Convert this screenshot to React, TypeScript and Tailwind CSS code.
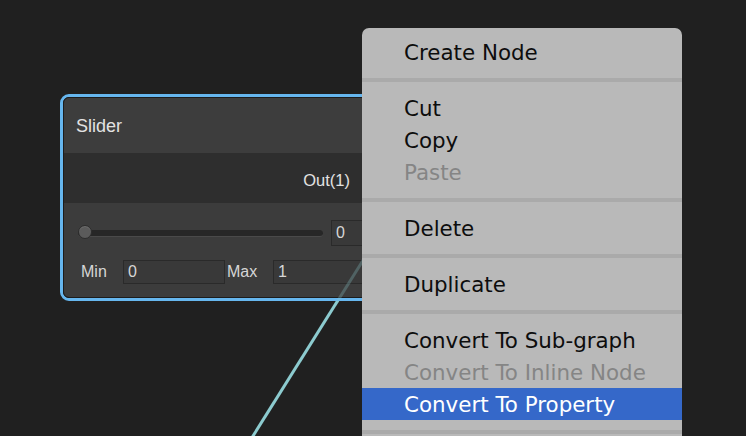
import React from 'react';

type MenuEntry = { label: string; disabled?: boolean; active?: boolean } | 'sep';

const menu: MenuEntry[] = [
  { label: 'Create Node' },
  'sep',
  { label: 'Cut' },
  { label: 'Copy' },
  { label: 'Paste', disabled: true },
  'sep',
  { label: 'Delete' },
  'sep',
  { label: 'Duplicate' },
  'sep',
  { label: 'Convert To Sub-graph' },
  { label: 'Convert To Inline Node', disabled: true },
  { label: 'Convert To Property', active: true },
  'sep',
];

const NodeInput = ({ value, className }: { value: string; className: string }) => (
  <div className={`bg-[#393939] border border-[#2a2a2a] text-[16px] text-[#d6d6d6] pl-[4px] flex items-center ${className}`}>
    {value}
  </div>
);

const SliderNode = () => (
  <div className="absolute left-[60px] top-[94px] w-[340px] rounded-[9px] border-[3px] border-[#66b6ee] font-['Liberation_Sans',sans-serif]">
    <div className="rounded-[6px] border border-[#1c1c1c] overflow-hidden">
      <div className="h-[55px] bg-[#3d3d3d] flex items-center pl-[12px] pt-[1px] text-[18px] text-[#e2e2e2]">Slider</div>
      <div className="h-[50px] bg-[#2e2e2e] flex items-center justify-end pr-[46px] pt-[4px] text-[16.5px] text-[#e2e2e2]">Out(1)</div>
      <div className="h-[94px] bg-[#3c3c3c] pt-[17px] flex flex-col gap-[14px]">
        <div className="flex items-center pl-[14px] h-[26px]">
          <div className="relative w-[245px] h-[7px] rounded-full bg-[#272727] border-b border-[#4a4a4a]">
            <div className="absolute left-0 top-[-5px] w-[14px] h-[14px] rounded-full bg-[#5b5b5b] border border-[#2c2c2c] shadow-[inset_0_1px_0_#6e6e6e]" />
          </div>
          <NodeInput value="0" className="ml-[8px] w-[62px] h-[26px]" />
        </div>
        <div className="flex items-center pl-[17px] h-[24px]">
          <div className="w-[42px] text-[16px] text-[#d6d6d6]">Min</div>
          <NodeInput value="0" className="w-[102px] h-[24px]" />
          <div className="w-[48px] pl-[2px] text-[16px] text-[#d6d6d6]">Max</div>
          <NodeInput value="1" className="w-[110px] h-[24px]" />
        </div>
      </div>
    </div>
  </div>
);

const ContextMenu = () => (
  <div className="absolute left-[362px] top-[28px] w-[320px] h-[440px] rounded-[7px] bg-[#b9b9b9] pt-[8px] font-['DejaVu_Sans',sans-serif] text-[21.4px]">
    {menu.map((m, i) =>
      m === 'sep' ? (
        <div key={i} className="my-[10px] h-[4px] bg-[#aaaaaa]" />
      ) : (
        <div
          key={i}
          className={`h-[32px] flex items-center pl-[42px] pt-[3px] ${m.active ? 'bg-[#3568c9] text-white' : m.disabled ? 'text-[#858585]' : 'text-[#0d0d0d]'}`}
        >
          {m.label}
        </div>
      )
    )}
  </div>
);

export default function App() {
  return (
    <div className="relative w-[746px] h-[436px] overflow-hidden bg-[#202020]">
      <svg className="absolute inset-0" width="746" height="436">
        <line x1="250.5" y1="440" x2="397" y2="206" stroke="#8ccbcf" strokeWidth="3" />
      </svg>
      <SliderNode />
      <svg className="absolute inset-0 pointer-events-none" width="746" height="436">
        <line x1="337" y1="302" x2="397" y2="206" stroke="#8ccbcf" strokeWidth="3" opacity="0.28" />
      </svg>
      <ContextMenu />
    </div>
  );
}
